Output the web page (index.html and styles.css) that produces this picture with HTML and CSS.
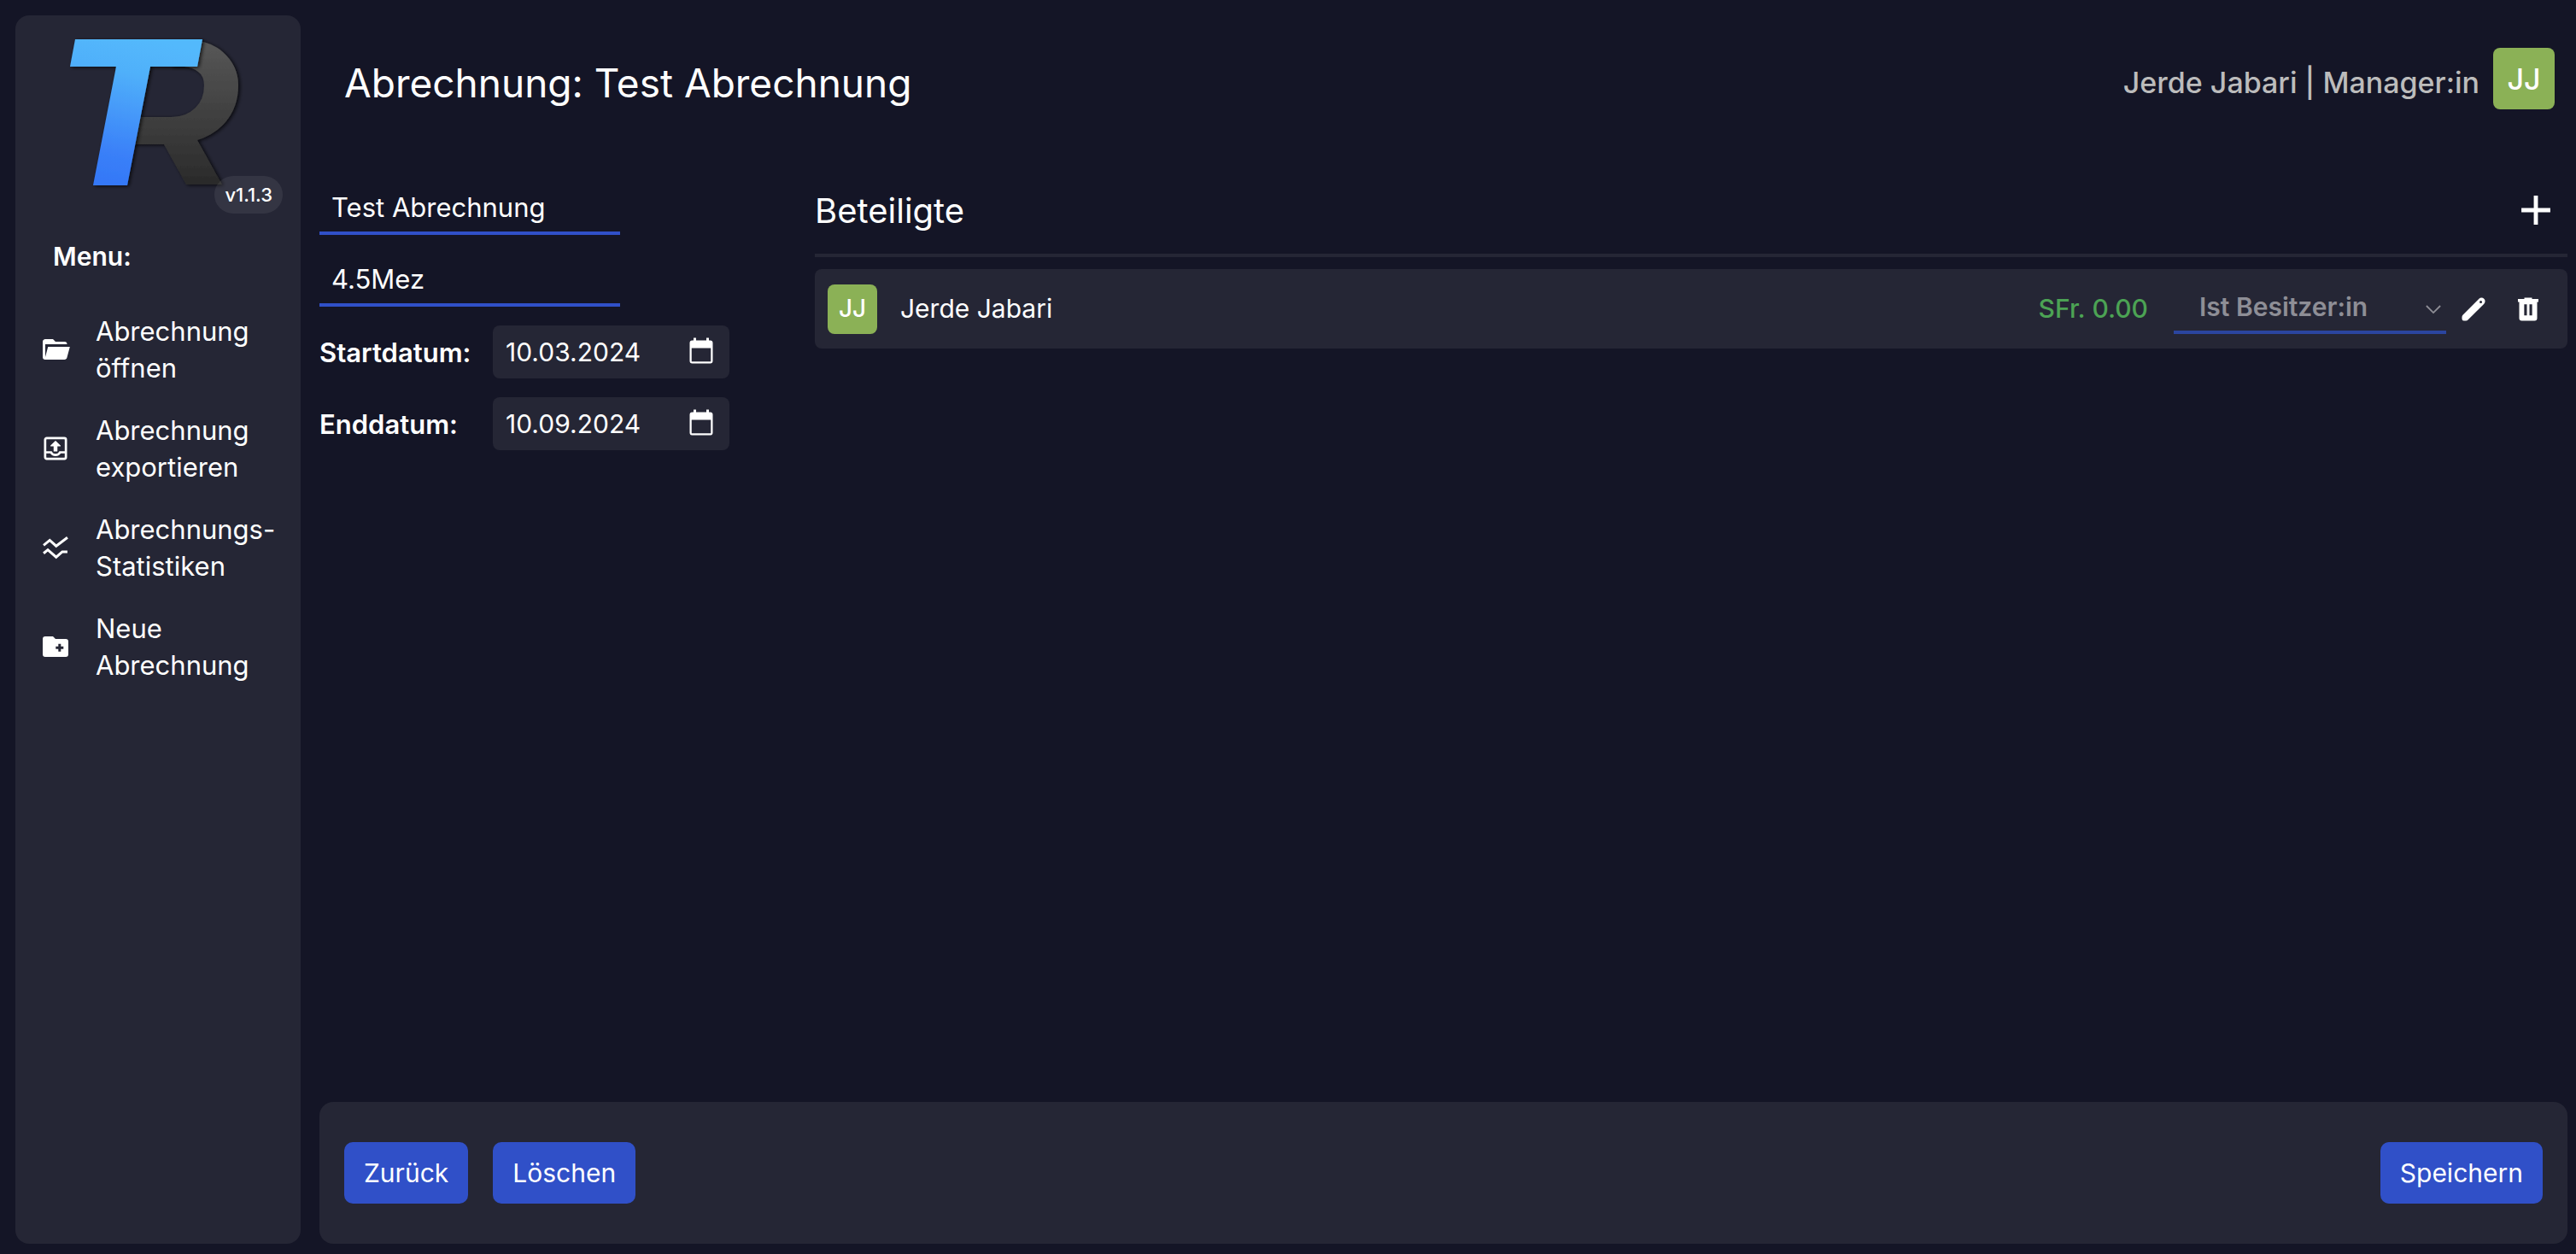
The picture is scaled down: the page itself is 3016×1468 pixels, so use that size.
FILE: index.html
```html
<!DOCTYPE html>
<html lang="de">
<head>
<meta charset="utf-8">
<title>Abrechnung: Test Abrechnung</title>
<meta name="viewport" content="width=device-width, initial-scale=1">
<link rel="stylesheet" href="styles.css">
</head>
<body>
<div class="app">
  <aside class="sidebar">
    <div class="brand">
      <svg class="logo" viewBox="0 0 210 180" role="img" aria-label="TR">
        <defs>
          <linearGradient id="blue" x1="0.6" y1="0" x2="0.4" y2="1">
            <stop offset="0" stop-color="#53b9fc"/>
            <stop offset="0.25" stop-color="#50b0fa"/>
            <stop offset="0.8" stop-color="#3a80f8"/>
            <stop offset="1" stop-color="#3478f7"/>
          </linearGradient>
          <linearGradient id="grey" x1="0" y1="0" x2="0" y2="1">
            <stop offset="0" stop-color="#575757"/>
            <stop offset="1" stop-color="#2a2a2a"/>
          </linearGradient>
          <filter id="shade" x="-10%" y="-10%" width="120%" height="120%">
            <feDropShadow dx="2" dy="1" stdDeviation="2" flood-color="#000" flood-opacity="0.75"/>
          </filter>
        </defs>
        <path filter="url(#shade)" fill="url(#grey)" d="M130 4H151Q169 6 181 17Q199 33 199 56Q199 81 184 99Q171 114 151 120L180 172H138L112 125H72L80 93H121Q138 93 149 82Q159 72 159 56Q159 45 152 40Q146 35 136 34H120Z"/>
        <path filter="url(#shade)" fill="url(#blue)" d="M8 2H157L151 34H96L69 173H29L56 34H2Z"/>
      </svg>
      <span class="version">v1.1.3</span>
    </div>
    <h2 class="menu-title">Menu:</h2>
    <nav class="menu">
      <a class="menu-item" href="#">
        <svg class="icon" viewBox="0 0 24 24"><path d="M19 20H4a2 2 0 0 1-2-2V6c0-1.100.9-2 2-2h6l2 2h7a2 2 0 0 1 2 2H4v10l2.140-8h17.070l-2.280 8.500c-.23.870-1.010 1.500-1.930 1.500"/></svg>
        <span>Abrechnung öffnen</span>
      </a>
      <a class="menu-item" href="#">
        <svg class="icon" viewBox="0 0 24 24"><g fill="none" stroke="currentColor" stroke-width="1.800"><rect x="3.900" y="3.900" width="16.200" height="16.200" rx="1.200"/><path d="M4 15h4.500c.7 1.500 2 2.100 3.500 2.100s2.800-.6 3.500-2.100H20"/></g><path stroke="currentColor" stroke-width=".8" stroke-linejoin="round" d="M8.400 10 12 6.500l3.600 3.500h-2.500v4h-2.200v-4z"/></svg>
        <span>Abrechnung exportieren</span>
      </a>
      <a class="menu-item" href="#">
        <svg class="icon" viewBox="0 0 24 24"><path fill="none" stroke="currentColor" stroke-width="2" d="M2.700 10.200 7.500 6.300l5 4.500L21.300 4.200M2.700 16.500l3.300-2.700 6.500 5.700 4.800-4.200h4"/></svg>
        <span>Abrechnungs-Statistiken</span>
      </a>
      <a class="menu-item" href="#">
        <svg class="icon" viewBox="0 0 24 24"><path d="M20 6h-8l-2-2H4a2 2 0 0 0-2 2v12a2 2 0 0 0 2 2h16a2 2 0 0 0 2-2V8a2 2 0 0 0-2-2m-1.800 7.900h-2v2h-2v-2h-2v-2h2v-2h2v2h2z"/></svg>
        <span>Neue Abrechnung</span>
      </a>
    </nav>
  </aside>

  <main class="main">
    <header class="topbar">
      <h1 class="title">Abrechnung: Test Abrechnung</h1>
      <div class="user">
        <span class="user-name">Jerde Jabari | Manager:in</span>
        <span class="avatar avatar-large">JJ</span>
      </div>
    </header>

    <div class="content">
      <form class="details">
        <input class="text-field" type="text" value="Test Abrechnung" aria-label="Name">
        <input class="text-field" type="text" value="4.5Mez" aria-label="Beschreibung">
        <div class="date-row">
          <label for="start">Startdatum:</label>
          <div class="date-box">
            <input id="start" type="text" value="10.03.2024">
            <button class="icon-button" type="button" aria-label="Startdatum wählen">
              <svg class="icon" viewBox="0 0 24 24"><path d="M19 3h-1V1h-2v2H8V1H6v2H5a2 2 0 0 0-2 2v14a2 2 0 0 0 2 2h14a2 2 0 0 0 2-2V5a2 2 0 0 0-2-2m.5 16.500h-15V9h15z"/></svg>
            </button>
          </div>
        </div>
        <div class="date-row">
          <label for="end">Enddatum:</label>
          <div class="date-box">
            <input id="end" type="text" value="10.09.2024">
            <button class="icon-button" type="button" aria-label="Enddatum wählen">
              <svg class="icon" viewBox="0 0 24 24"><path d="M19 3h-1V1h-2v2H8V1H6v2H5a2 2 0 0 0-2 2v14a2 2 0 0 0 2 2h14a2 2 0 0 0 2-2V5a2 2 0 0 0-2-2m.5 16.500h-15V9h15z"/></svg>
            </button>
          </div>
        </div>
      </form>

      <section class="people">
        <div class="people-head">
          <h2>Beteiligte</h2>
          <button class="icon-button" type="button" aria-label="Hinzufügen">
            <svg class="icon-add" viewBox="0 0 24 24"><path d="M19 13h-6v6h-2v-6H5v-2h6V5h2v6h6z"/></svg>
          </button>
        </div>
        <div class="person">
          <span class="avatar">JJ</span>
          <span class="person-name">Jerde Jabari</span>
          <span class="amount">SFr. 0.00</span>
          <div class="role">
            <select aria-label="Rolle" disabled><option>Ist Besitzer:in</option></select>
            <svg class="chevron" viewBox="0 0 20 12"><path d="M1 1l9 9 9-9"/></svg>
          </div>
          <button class="icon-button" type="button" aria-label="Bearbeiten">
            <svg class="icon" viewBox="0 0 24 24"><path fill-rule="evenodd" d="M3 18v1.500A1.500 1.500 0 0 0 4.500 21H6c.7 0 1.300-.3 1.800-.8L20.200 7.800a2.700 2.700 0 0 0 0-3.900 2.700 2.700 0 0 0-3.900 0L3.800 16.300c-.5.500-.8 1-.8 1.700M17.700 5.400a1 1 0 1 1 0 2 1 1 0 0 1 0-2"/></svg>
          </button>
          <button class="icon-button" type="button" aria-label="Entfernen">
            <svg class="icon" viewBox="0 0 24 24"><path fill-rule="evenodd" d="M9 3h6v1h5v2.300h-1V19a2 2 0 0 1-2 2H7a2 2 0 0 1-2-2V6.300H4V4h5zM8.900 8.100v8.700H11V8.100zm4.100 0v8.700h2.100V8.100z"/></svg>
          </button>
        </div>
      </section>
    </div>

    <footer class="actions">
      <button class="button" type="button">Zurück</button>
      <button class="button" type="button">Löschen</button>
      <button class="button button-save" type="button">Speichern</button>
    </footer>
  </main>
</div>
</body>
</html>
```
FILE: styles.css
```css
:root {
  --bg: #141526;
  --panel: #252635;
  --blue: #3050c8;
  --green: #8bb156;
}

* { box-sizing: border-box; }

body {
  margin: 0;
  background: var(--bg);
  color: #fff;
  font-family: "Inter", sans-serif;
  font-size: 31px;
  font-weight: 400;
  line-height: 43px;
}

button, input, select { font: inherit; color: inherit; }

h1, h2 { margin: 0; }

.app {
  display: flex;
  gap: 22px;
  min-height: 100vh;
  padding: 18px 10px 12px 18px;
}

.sidebar {
  flex: 0 0 333px;
  background: var(--panel);
  border-radius: 16px;
}

.brand { position: relative; padding: 26px 62px 0; }

.logo { display: block; width: 210px; height: 180px; }

.version {
  position: absolute;
  right: 21px;
  bottom: -26px;
  height: 44px;
  padding: 0 12px;
  border-radius: 22px;
  background: rgba(255, 255, 255, 0.07);
  font-size: 22px;
  font-weight: 500;
  line-height: 44px;
}

.menu-title {
  padding: 55px 44px 0;
  font-size: 30px;
  font-weight: 600;
}

.menu {
  display: flex;
  flex-direction: column;
  gap: 30px;
  padding: 44px 12px 0 29px;
}

.menu-item {
  display: flex;
  align-items: center;
  gap: 29px;
  color: #fff;
  text-decoration: none;
}

.icon { display: block; flex: none; width: 36px; height: 36px; fill: currentColor; }

.main {
  flex: 1;
  min-width: 0;
  display: flex;
  flex-direction: column;
}

.topbar {
  display: flex;
  justify-content: space-between;
  align-items: flex-start;
  padding: 38px 15px 0 29px;
}

.title { padding-top: 4px; font-size: 46px; font-weight: 400; line-height: 74px; }

.user { display: flex; align-items: center; gap: 16px; }

.user-name { padding-top: 8px; color: #bcbcbc; font-size: 34px; font-weight: 500; }

.avatar {
  display: grid;
  place-items: center;
  flex: none;
  width: 58px;
  height: 58px;
  border-radius: 8px;
  background: var(--green);
  font-size: 28px;
  font-weight: 500;
}

.avatar-large { width: 72px; height: 72px; font-size: 34px; }

.content {
  flex: 1;
  display: flex;
  gap: 100px;
  padding-top: 79px;
}

.details {
  flex: 0 0 480px;
  display: flex;
  flex-direction: column;
  gap: 22px;
}

.text-field {
  width: 352px;
  height: 62px;
  margin: 0;
  padding: 0 14px;
  border: 0;
  border-bottom: 4px solid var(--blue);
  background: none;
}

.date-row { display: flex; align-items: center; }

.date-row label { width: 203px; font-size: 31px; font-weight: 600; }

.date-box {
  display: flex;
  align-items: center;
  justify-content: space-between;
  width: 277px;
  height: 62px;
  padding: 0 15px;
  border-radius: 8px;
  background: var(--panel);
}

.date-box input {
  flex: 1;
  min-width: 0;
  padding: 0;
  border: 0;
  background: none;
  font-size: 30px;
}

.icon-button { flex: none; padding: 0; border: 0; background: none; }

.people { flex: 1; min-width: 0; }

.people-head {
  display: flex;
  justify-content: space-between;
  align-items: center;
  height: 88px;
  padding: 0 8px 18px 0;
  border-bottom: 4px solid var(--panel);
}

.people-head h2 { font-size: 40px; font-weight: 400; }

.icon-add { display: block; width: 58px; height: 58px; fill: currentColor; }

.person {
  display: flex;
  align-items: center;
  height: 93px;
  margin-top: 14px;
  padding: 0 28px 0 15px;
  border-radius: 8px;
  background: var(--panel);
}

.person-name { flex: 1; padding-left: 27px; font-size: 30px; }

.amount { color: #4ca354; font-weight: 500; font-size: 30px; }

.role { position: relative; margin: 0 14px 0 30px; }

.role select {
  display: block;
  width: 319px;
  height: 58px;
  padding: 0 30px;
  border: 0;
  border-bottom: 4px solid #2b459f;
  border-radius: 0;
  background: none;
  appearance: none;
  color: #8e8e96;
  font-size: 30px;
  font-weight: 600;
  opacity: 1;
}

.chevron {
  position: absolute;
  right: 6px;
  top: 24px;
  width: 18px;
  height: 11px;
  fill: none;
  stroke: #8e8e96;
  stroke-width: 2;
}

.person .icon-button + .icon-button { margin-left: 28px; }

.actions {
  display: flex;
  gap: 29px;
  padding: 47px 29px;
  border-radius: 16px;
  background: var(--panel);
}

.button {
  height: 72px;
  padding: 0 23px;
  border: 0;
  border-radius: 10px;
  background: var(--blue);
  font-size: 30px;
}

.button-save { margin-left: auto; }
```
